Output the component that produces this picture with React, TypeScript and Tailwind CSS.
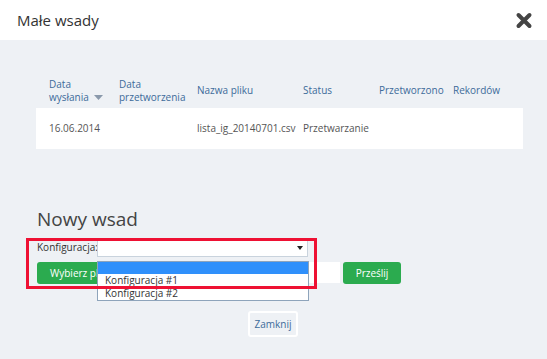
import React from "react";

export default function App() {
  return (
    <div className="relative w-[547px] h-[359px] overflow-hidden bg-[#eef1f5] font-['Open_Sans',sans-serif]">
      <div className="h-10 bg-white flex items-center justify-between pl-[17px] pr-[14px]">
        <span className="text-[15px] text-[#333]">Małe wsady</span>
        <svg width="18" height="17" viewBox="0 0 18 17">
          <path d="M3.5 3 L14.5 14 M14.5 3 L3.5 14" stroke="#444" strokeWidth="4" strokeLinecap="round" />
        </svg>
      </div>
      <div className="px-[36px]">
        <div className="mt-[33px] h-[35px] flex items-center text-[10px] leading-[13px] text-[#3d6b9a]">
          <div className="w-[83px] pl-[13px] flex items-end">
            <span>Data<br />wysłania</span>
            <svg width="9" height="6" viewBox="0 0 9 6" className="ml-[5px] mb-[3px]">
              <path d="M0 0 H9 L4.5 5 Z" fill="#8a99ab" />
            </svg>
          </div>
          <div className="w-[78px]">Data<br />przetworzenia</div>
          <div className="w-[106px]">Nazwa pliku</div>
          <div className="w-[76px]">Status</div>
          <div className="w-[74px]">Przetworzono</div>
          <div>Rekordów</div>
        </div>
        <div className="w-[487px] h-[41px] bg-white flex items-center text-[10px] text-[#555]">
          <div className="w-[83px] pl-[13px]">16.06.2014</div>
          <div className="w-[78px]"></div>
          <div className="w-[106px]">lista_ig_20140701.csv</div>
          <div className="w-[76px]">Przetwarzanie</div>
        </div>
        <div className="mt-[58px] pl-[1px] text-[19px] leading-[24px] text-[#444]">Nowy wsad</div>
        <div className="mt-[7px] flex items-center h-[19px]">
          <span className="pl-[1px] w-[61px] text-[10px] text-[#333]">Konfiguracja:</span>
          <div className="w-[211px] h-[19px] bg-white border border-[#c9d3dd] flex items-center justify-end pr-[4px]">
            <svg width="6" height="4" viewBox="0 0 6 4">
              <path d="M0 0 H6 L3 4 Z" fill="#222" />
            </svg>
          </div>
        </div>
        <div className="mt-[5px] flex items-center">
          <div className="pl-[1px] flex">
            <div className="w-[90px] h-[22px] bg-[#2bab4f] rounded-l-[3px] text-white text-[10px] flex items-center pl-[13px]">Wybierz plik</div>
            <div className="w-[213px] h-[21px] bg-white"></div>
          </div>
          <div className="ml-[3px] w-[58px] h-[22px] bg-[#2bab4f] rounded-[3px] text-white text-[10px] flex items-center justify-center">Prześlij</div>
        </div>
        <div className="mt-[27px] flex justify-center pr-[1px]">
          <div className="w-[50px] h-[26px] border-2 border-white rounded-[3px] bg-[#eef1f5] text-[10px] text-[#3d6b9a] flex items-center justify-center">Zamknij</div>
        </div>
      </div>
      {/* dropdown list */}
      <div className="absolute left-[97px] top-[261px] w-[212px] bg-white border border-[#8ea4bb] text-[10px] text-[#333] leading-[13px]">
        <div className="h-[12px] bg-[#2f90fb]"></div>
        <div className="h-[13px] pl-[7px] flex items-center">Konfiguracja #1</div>
        <div className="h-[13px] pl-[7px] flex items-center">Konfiguracja #2</div>
      </div>
      {/* red annotation */}
      <div className="absolute left-[26px] top-[238px] w-[291px] h-[51px] border-[3px] border-[#ee1133] pointer-events-none"></div>
    </div>
  );
}
